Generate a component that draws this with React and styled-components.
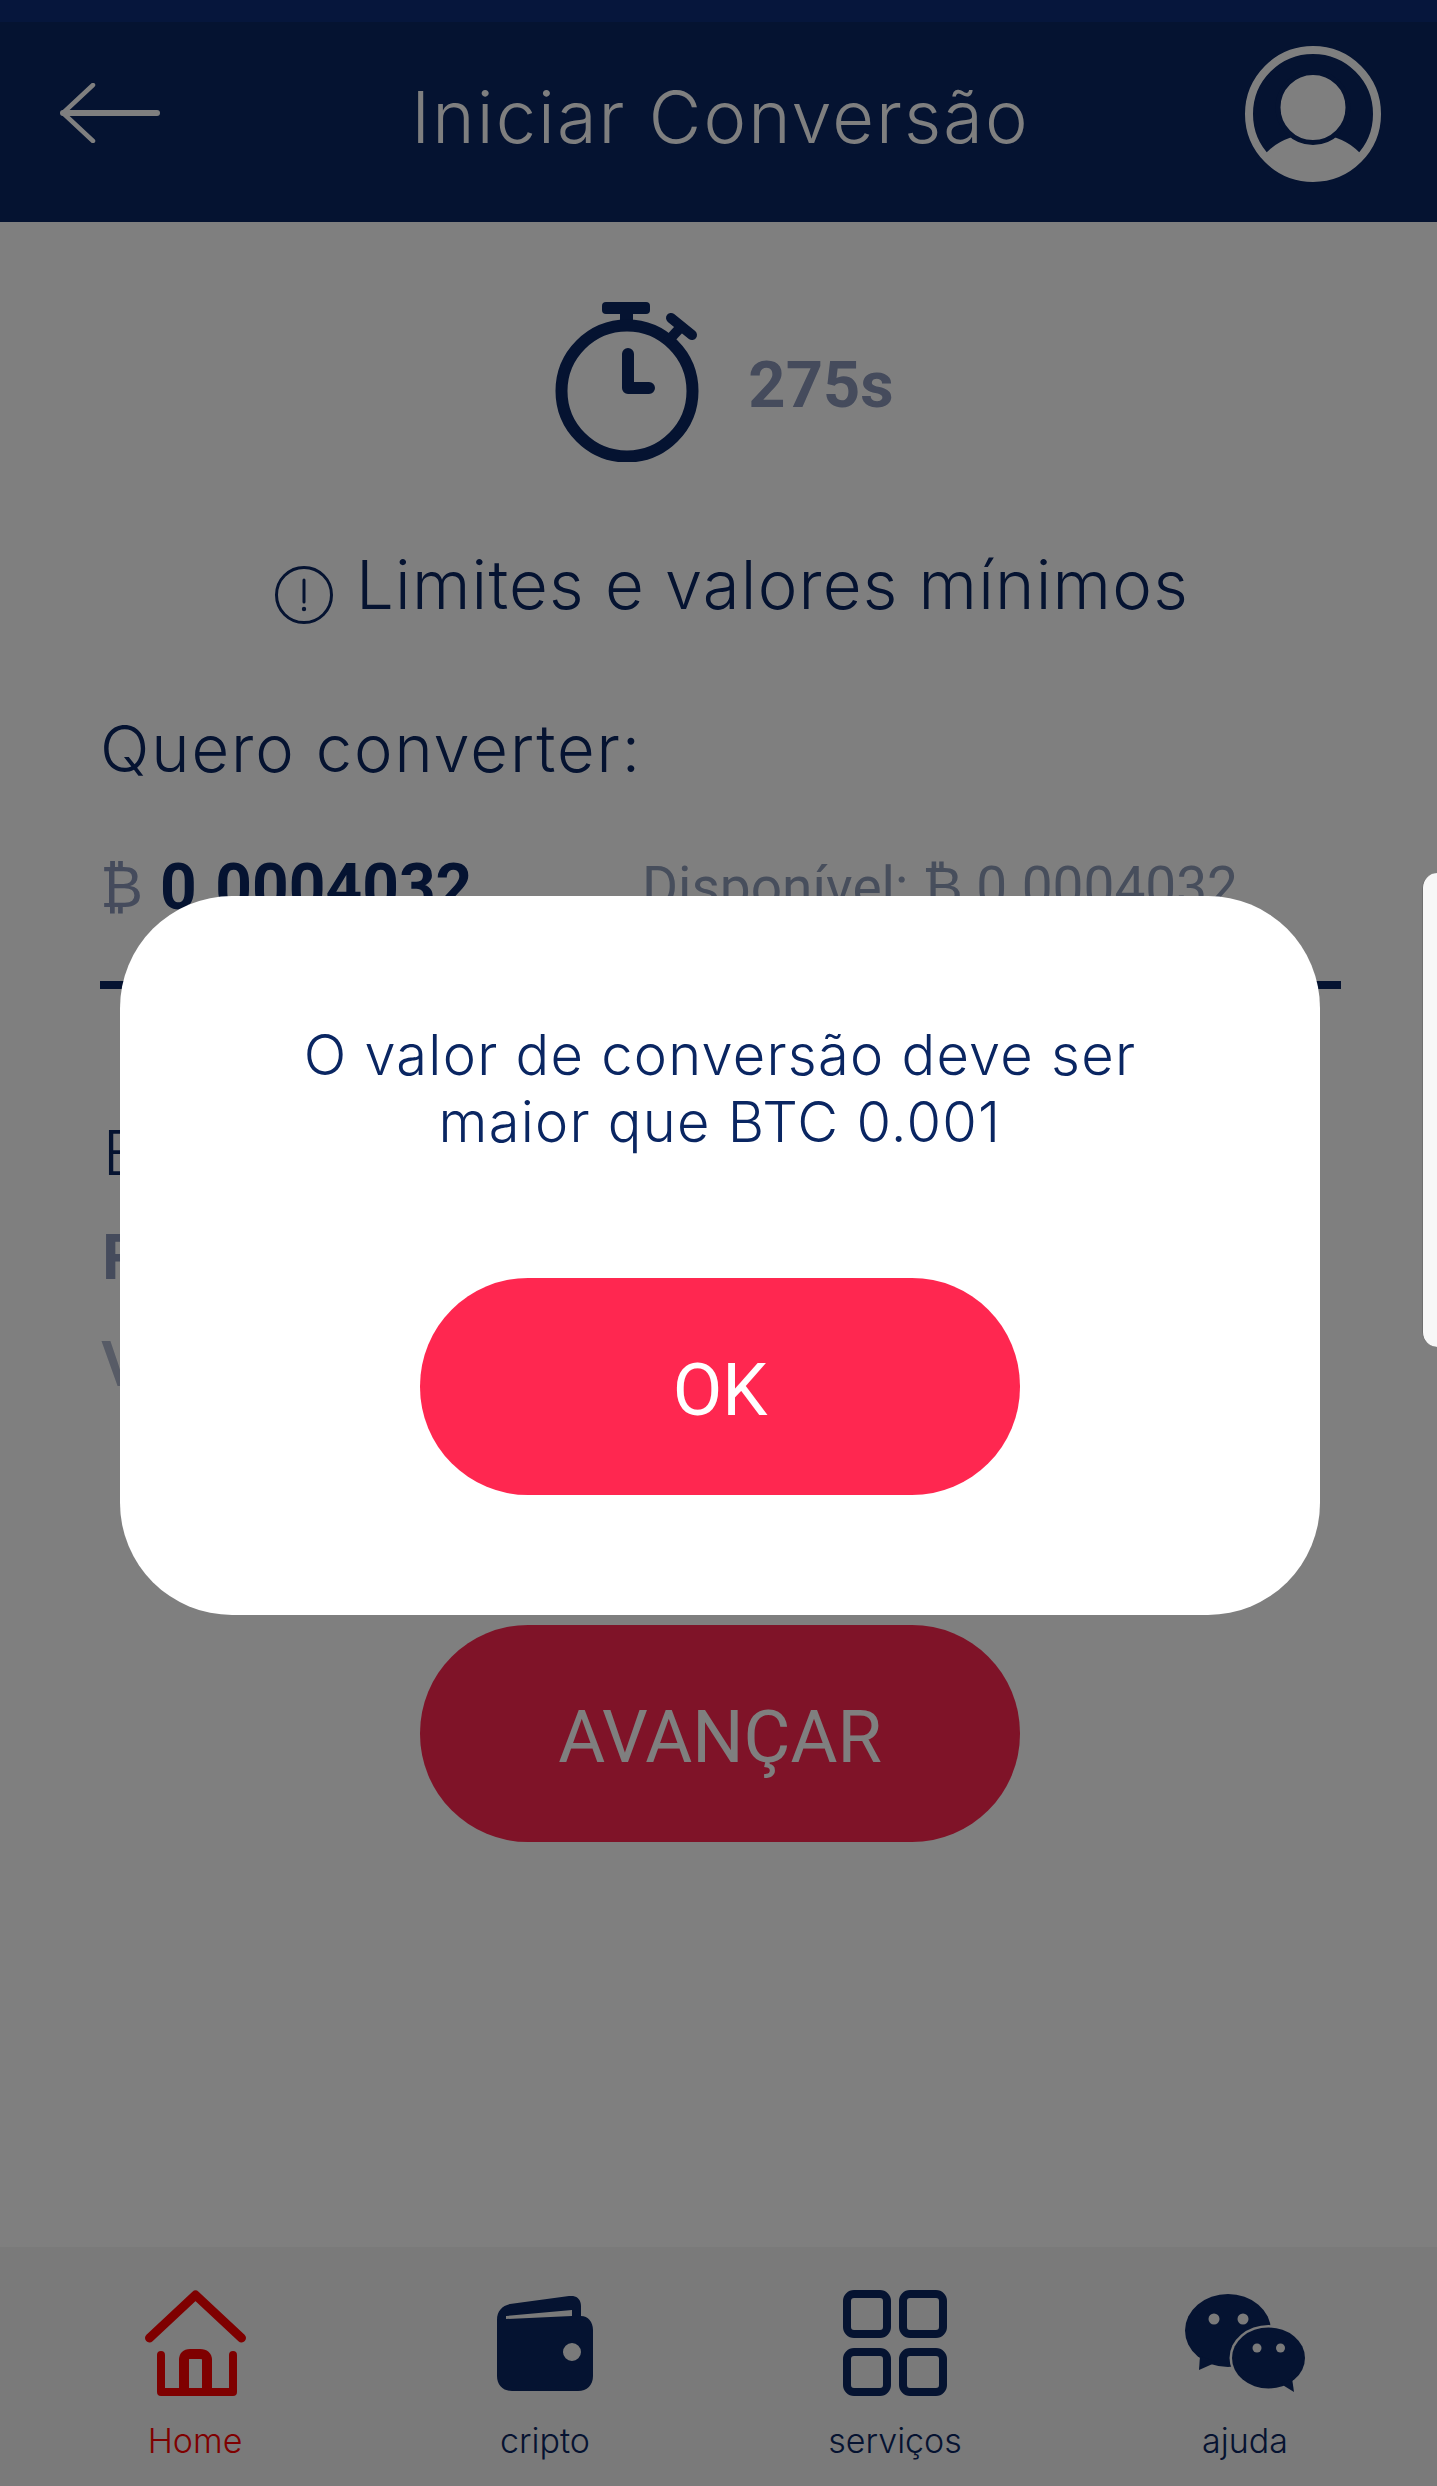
import React from 'react';
import styled, { createGlobalStyle } from 'styled-components';

const GlobalStyle = createGlobalStyle`
  html, body { margin: 0; padding: 0; background: #fff; }
  * { box-sizing: border-box; }
`;

const navy = '#0a2662';
const slate = '#8a97b8';
const sans = '"Inter", "Noto Sans", sans-serif';
const numeric = '"Roboto", "DejaVu Sans", sans-serif';

const Page = styled.div`
  position: relative;
  width: 1437px;
  height: 2486px;
  overflow: hidden;
  display: flex;
  flex-direction: column;
  background: #fff;
  font-family: ${sans};
`;

const StatusStrip = styled.div`
  height: 22px;
  background: #0c2c78;
`;

const Header = styled.header`
  height: 200px;
  padding: 0 56px 16px 60px;
  display: grid;
  grid-template-columns: 1fr auto 1fr;
  align-items: center;
  background: #0a2662;
  color: #fff;
`;

const HeaderEnd = styled.div`
  display: flex;
  justify-content: ${p => p.$align};
  margin-top: ${p => p.$nudge || 0}px;
`;

const Title = styled.h1`
  margin: 5px 0 0;
  font-size: 72px;
  line-height: 80px;
  font-weight: 300;
  letter-spacing: 2.1px;
  white-space: nowrap;
`;

const Main = styled.main`
  flex: 1;
  padding: 80px 96px 0 100px;
  color: ${navy};
`;

const TimerRow = styled.div`
  display: flex;
  justify-content: center;
  align-items: center;
  gap: 48px;
  padding-left: 8px;
`;

const Countdown = styled.span`
  font-family: ${numeric};
  font-size: 65px;
  line-height: 76px;
  font-weight: 700;
  color: ${slate};
  margin-top: 5px;
`;

const LimitsRow = styled.div`
  margin-top: 88px;
  padding-left: 22px;
  display: flex;
  justify-content: center;
  align-items: flex-start;
  gap: 22px;
`;

const LimitsText = styled.span`
  font-size: 67px;
  line-height: 70px;
  font-weight: 350;
  letter-spacing: 1.2px;
  white-space: nowrap;
`;

const InfoMark = styled.svg`
  width: 60px;
  height: 60px;
  margin-top: 15px;
  flex: none;
`;

const FieldLabel = styled.div`
  margin-top: 89px;
  font-size: 65px;
  line-height: 70px;
  font-weight: 350;
  letter-spacing: 1.9px;
`;

const AmountRow = styled.div`
  margin-top: 68px;
  height: 70px;
  display: flex;
  align-items: center;
  font-family: ${numeric};
  white-space: nowrap;
`;

const Coin = styled.span`
  width: 60px;
  font-size: 58px;
  color: ${slate};
`;

const Amount = styled.span`
  width: 482px;
  font-size: 64px;
  font-weight: 700;
`;

const Available = styled.span`
  font-size: 55px;
  color: #8f9cb8;
`;

const Divider = styled.div`
  margin-top: 59px;
  height: 8px;
  background: ${navy};
`;

const SummaryLine = styled.div`
  margin-top: ${p => p.$gap}px;
  padding-left: ${p => p.$inset}px;
  height: 70px;
  font-size: 62px;
  line-height: 70px;
  font-weight: ${p => p.$weight};
  color: ${p => p.$color};
`;

const PillButton = styled.button`
  display: block;
  width: 600px;
  height: 217px;
  padding: 8px 0 0;
  border: 0;
  border-radius: 108px;
  background: #ff2750;
  color: #fff;
  font-family: ${numeric};
  font-size: 72px;
  font-weight: 400;
`;

const AdvanceButton = styled(PillButton)`
  margin: 226px 0 0 320px;
`;

const BottomNav = styled.nav`
  height: 239px;
  padding: 0 17px 0 20px;
  display: grid;
  grid-template-columns: repeat(4, 1fr);
  background: #f4f4f4;
`;

const NavItem = styled.div`
  display: flex;
  flex-direction: column;
  align-items: center;
  color: ${p => (p.$active ? '#ff0000' : navy)};
`;

const NavIconSlot = styled.div`
  height: 106px;
  margin-top: 43px;
  display: flex;
  align-items: center;
  justify-content: center;
`;

const NavLabel = styled.span`
  margin-top: 23px;
  font-size: 34px;
  line-height: 44px;
  font-weight: 300;
`;

const Scrim = styled.div`
  position: absolute;
  inset: 0;
  padding-top: 896px;
  display: flex;
  justify-content: center;
  background: rgba(0, 0, 0, 0.5);
`;

const Dialog = styled.div`
  width: 1200px;
  height: 719px;
  margin-left: 3px;
  padding-top: 126px;
  display: flex;
  flex-direction: column;
  align-items: center;
  border-radius: 112px;
  background: #fff;
`;

const DialogText = styled.p`
  margin: 0 0 122px;
  text-align: center;
  font-size: 56px;
  line-height: 67px;
  font-weight: 350;
  letter-spacing: 1.25px;
  color: ${navy};
`;

const EdgeHandle = styled.div`
  position: absolute;
  top: 873px;
  right: 0;
  width: 15px;
  height: 474px;
  background: #f7f7f7;
  border-left: 1px solid #6e6e6e;
  border-radius: 16px 0 0 16px;
`;

const BackArrow = () => (
  <svg width="100" height="60" viewBox="0 0 100 60" fill="none" stroke="currentColor" strokeLinecap="round" strokeLinejoin="round">
    <path d="M3 30H97" strokeWidth="6" />
    <path d="M33 2 3 30l30 28" strokeWidth="4.5" />
  </svg>
);

const AvatarIcon = () => (
  <svg width="136" height="136" viewBox="0 0 136 136">
    <defs>
      <clipPath id="avatar-inner"><circle cx="68" cy="68" r="66" /></clipPath>
    </defs>
    <circle cx="68" cy="68" r="64" fill="none" stroke="#fff" strokeWidth="8" />
    <g clipPath="url(#avatar-inner)">
      <ellipse cx="68" cy="138" rx="60" ry="50" fill="#fff" />
      <circle cx="68" cy="61.5" r="35" fill="#fff" stroke="#0a2662" strokeWidth="5" />
    </g>
  </svg>
);

const TimerIcon = () => (
  <svg width="145" height="160" viewBox="0 0 145 160" fill="none" stroke={navy}>
    <rect x="47" y="0" width="48" height="12" rx="4" fill={navy} stroke="none" />
    <rect x="65" y="10" width="13" height="12" fill={navy} stroke="none" />
    <circle cx="72" cy="89" r="65.5" strokeWidth="12" />
    <path d="M112 40l14-15" strokeWidth="10" />
    <path d="M116 16l21 17" strokeWidth="10" strokeLinecap="round" />
    <path d="M73 52V86H94" strokeWidth="12" strokeLinecap="round" strokeLinejoin="round" />
  </svg>
);

const InfoIcon = () => (
  <InfoMark viewBox="0 0 60 60" fill="none" stroke={navy}>
    <circle cx="30" cy="30" r="27.5" strokeWidth="3" />
    <path d="M30 15V37" strokeWidth="3" strokeLinecap="round" />
    <circle cx="30" cy="44" r="2.2" fill={navy} stroke="none" />
  </InfoMark>
);

const HomeIcon = () => (
  <svg width="101" height="106" viewBox="0 0 101 106" fill="none" stroke="currentColor" strokeLinecap="round" strokeLinejoin="round">
    <path d="M4.5 48 50.5 5 96.5 48" strokeWidth="9" />
    <path d="M16 65V102H88V65" strokeWidth="8" />
    <path d="M39 100V70Q39 64 45 64H55Q62 64 62 70V100" strokeWidth="10" />
  </svg>
);

const WalletIcon = () => (
  <svg width="96" height="95" viewBox="0 0 96 95">
    <path
      fillRule="evenodd"
      fill="currentColor"
      d="M0 24C0 15 5 10 13 8L72 0C79-1 84 3 84 10V20C91 20 96 26 96 34V80C96 89 90 95 81 95H15C6 95 0 89 0 80ZM9 20V23L75 20V14ZM84 56A9 9 0 1 0 66 56 9 9 0 1 0 84 56Z"
    />
  </svg>
);

const ServicesIcon = () => (
  <svg width="104" height="106" viewBox="0 0 104 106" fill="none" stroke="currentColor" strokeWidth="8">
    <rect x="4" y="4" width="40" height="40" rx="7" />
    <rect x="60" y="4" width="40" height="40" rx="7" />
    <rect x="4" y="62" width="40" height="40" rx="7" />
    <rect x="60" y="62" width="40" height="40" rx="7" />
  </svg>
);

const ChatIcon = () => (
  <svg width="120" height="98" viewBox="0 0 120 98">
    <ellipse cx="43" cy="36.5" rx="43" ry="36.5" fill="currentColor" />
    <path d="M15 62 14 76 32 68Z" fill="currentColor" />
    <ellipse cx="83.5" cy="64" rx="39" ry="33" fill="#f4f4f4" />
    <ellipse cx="83.5" cy="64" rx="36.5" ry="30.5" fill="currentColor" />
    <path d="M96 90 109 98 107 84Z" fill="currentColor" />
    <circle cx="29" cy="25" r="5.5" fill="#f4f4f4" />
    <circle cx="58" cy="25" r="5.5" fill="#f4f4f4" />
    <circle cx="72" cy="54" r="4.5" fill="#f4f4f4" />
    <circle cx="95.5" cy="54" r="4.5" fill="#f4f4f4" />
  </svg>
);

const navEntries = [
  { label: 'Home', icon: <HomeIcon />, active: true },
  { label: 'cripto', icon: <WalletIcon /> },
  { label: 'serviços', icon: <ServicesIcon /> },
  { label: 'ajuda', icon: <ChatIcon /> },
];

export default function App() {
  return (
    <Page>
      <GlobalStyle />
      <StatusStrip />
      <Header>
        <HeaderEnd $align="flex-start" $nudge={-2}><BackArrow /></HeaderEnd>
        <Title>Iniciar Conversão</Title>
        <HeaderEnd $align="flex-end"><AvatarIcon /></HeaderEnd>
      </Header>

      <Main>
        <TimerRow>
          <TimerIcon />
          <Countdown>275s</Countdown>
        </TimerRow>

        <LimitsRow>
          <InfoIcon />
          <LimitsText>Limites e valores mínimos</LimitsText>
        </LimitsRow>

        <FieldLabel>Quero converter:</FieldLabel>

        <AmountRow>
          <Coin>₿</Coin>
          <Amount>0.0004032</Amount>
          <Available>Disponível: ₿ 0.0004032</Available>
        </AmountRow>
        <Divider />

        <SummaryLine $gap={129} $inset={3} $weight={350} $color={navy}>E</SummaryLine>
        <SummaryLine $gap={34} $inset={2} $weight={700} $color={slate}>F</SummaryLine>
        <SummaryLine $gap={37} $inset={0} $weight={600} $color="#aeb7cc">V</SummaryLine>

        <AdvanceButton>AVANÇAR</AdvanceButton>
      </Main>

      <BottomNav>
        {navEntries.map(entry => (
          <NavItem key={entry.label} $active={entry.active}>
            <NavIconSlot>{entry.icon}</NavIconSlot>
            <NavLabel>{entry.label}</NavLabel>
          </NavItem>
        ))}
      </BottomNav>

      <Scrim>
        <Dialog>
          <DialogText>
            O valor de conversão deve ser
            <br />
            maior que BTC 0.001
          </DialogText>
          <PillButton>OK</PillButton>
        </Dialog>
      </Scrim>
      <EdgeHandle />
    </Page>
  );
}
